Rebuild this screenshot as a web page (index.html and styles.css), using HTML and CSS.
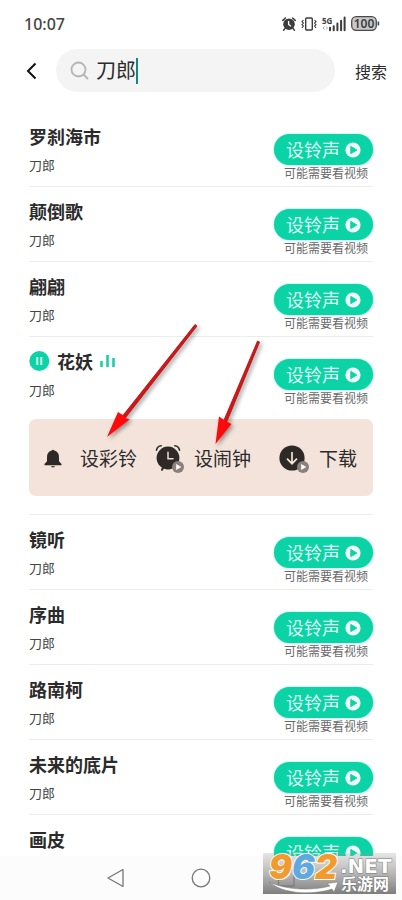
FILE: index.html
```
<!DOCTYPE html>
<html lang="zh-CN">
<head>
<meta charset="utf-8">
<meta name="viewport" content="width=device-width, initial-scale=1">
<title>刀郎 - 搜索</title>
<link rel="stylesheet" href="styles.css">
</head>
<body>
<svg class="defs" aria-hidden="true">
  <symbol id="play" viewBox="0 0 16 16">
    <circle cx="8" cy="8" r="7.6" fill="#effffa"/>
    <path d="M5.8 4.4v7.2L11.8 8z" fill="#0cd3a5" stroke="#0cd3a5" stroke-linejoin="round"/>
  </symbol>
  <symbol id="badge" viewBox="0 0 12 12">
    <circle cx="6" cy="6" r="6" fill="#8a807b"/>
    <path d="M4.4 3.4v5.2L8.8 6z" fill="#fff" stroke="#fff" stroke-width=".6" stroke-linejoin="round"/>
  </symbol>
</svg>
<div class="screen">
  <header class="status">
    <time>10:07</time>
    <div class="status-icons">
      <svg width="14" height="14" viewBox="0 0 14 14" fill="none" stroke="#3c3c3c">
        <circle cx="7" cy="7.2" r="5.8" fill="#3c3c3c" stroke="none"/>
        <path d="M.8 3.4 3.4 1M13.2 3.4 10.6 1M3 11.4l-1.400 1.800M11 11.400l1.400 1.800" stroke-width="1.500" stroke-linecap="round"/>
        <path d="M6.600 4v3.400l2.400 1.800" stroke="#fff" stroke-width="1.300"/>
      </svg>
      <svg width="16" height="14" viewBox="0 0 16 14" fill="none" stroke="#3c3c3c" stroke-width="1.400">
        <rect x="4.700" y="1" width="6.600" height="12" rx="1"/>
        <path d="M2.400 3 1 4.600l1.400 1.500L1 7.600l1.400 1.500L1 10.800M13.600 3 15 4.600l-1.400 1.500L15 7.600l-1.400 1.500 1.400 1.700" stroke-width="1.100"/>
      </svg>
      <svg class="signal" width="24" height="16" viewBox="0 0 24 16">
        <text x="0" y="8" class="net">5G</text>
        <path d="M2.500 10.500 1 12l1.500 1.500M4 10.500 5.500 12 4 13.500" stroke="#aaa" fill="none"/>
        <path d="M8 14.200v-2.400M11.700 14.200v-4M15.400 14.200V7.600M19.100 14.200V4.800M22.600 14.200V1.500" stroke="#3c3c3c" stroke-width="2" stroke-linecap="round" fill="none"/>
      </svg>
      <svg width="29" height="15" viewBox="0 0 29 15">
        <rect x=".7" y=".7" width="24.600" height="13.600" rx="4.500" fill="#c9c9c9" stroke="#4a4a4a" stroke-width="1.300"/>
        <path d="M27.400 5.500v4" stroke="#4a4a4a" stroke-width="1.600"/>
        <text x="13" y="12" text-anchor="middle" class="charge">100</text>
      </svg>
    </div>
  </header>

  <form class="search" onsubmit="return false">
    <button type="button" class="back" aria-label="返回">
      <svg width="12" height="18" viewBox="0 0 12 18"><path d="M9.500 1.500 2 9l7.500 7.500" fill="none" stroke="#111" stroke-width="2"/></svg>
    </button>
    <label class="field">
      <svg width="19" height="19" viewBox="0 0 19 19" fill="none" stroke="#b5b5b5" stroke-width="1.800"><circle cx="8.500" cy="8.500" r="7"/><path d="m13.500 13.500 4.500 4.500"/></svg>
      <input type="text" value="刀郎" aria-label="搜索歌曲">
      <span class="caret"></span>
    </label>
    <button type="submit" class="go">搜索</button>
  </form>

  <main>
    <ul class="songs">
      <li><div class="row"><div><h2>罗刹海市</h2><p>刀郎</p></div><div class="action"><button class="set">设铃声<svg><use href="#play"/></svg></button><small>可能需要看视频</small></div></div></li>
      <li><div class="row"><div><h2>颠倒歌</h2><p>刀郎</p></div><div class="action"><button class="set">设铃声<svg><use href="#play"/></svg></button><small>可能需要看视频</small></div></div></li>
      <li><div class="row"><div><h2>翩翩</h2><p>刀郎</p></div><div class="action"><button class="set">设铃声<svg><use href="#play"/></svg></button><small>可能需要看视频</small></div></div></li>
      <li class="active">
        <div class="row">
          <div>
            <h2>
              <button class="pause" aria-label="暂停"><svg width="21" height="21" viewBox="0 0 21 21"><circle cx="10.300" cy="10" r="10" fill="#0cd3a5"/><path d="M8.300 6v8M12.300 6v8" stroke="#d8fff4" stroke-width="2"/></svg></button>
              花妖
              <svg width="15" height="14" viewBox="0 0 15 14"><path d="M1.500 13V7M7.500 13V1M13.500 13V4" stroke="#1ccfa6" stroke-width="2.600"/></svg>
            </h2>
            <p>刀郎</p>
          </div>
          <div class="action"><button class="set">设铃声<svg><use href="#play"/></svg></button><small>可能需要看视频</small></div>
        </div>
        <div class="panel">
          <button>
            <svg width="30" height="30" viewBox="0 0 30 30" fill="#2c2927"><path d="M11.800 7.600a1.300 1.300 0 0 1 2.400 0c3 .8 4.800 3 4.800 6.400v4.200l2.500 2.800v1.200h-17V21L7 18.200V14c0-3.400 1.800-5.600 4.800-6.400zM11 23.200h4c-.3 1.600-3.700 1.600-4 0z"/></svg>设彩铃
          </button>
          <button>
            <svg width="30" height="30" viewBox="0 0 30 30"><g fill="none" stroke="#2c2927" stroke-linecap="round"><circle cx="14" cy="15" r="11.400" fill="#2c2927" stroke="none"/><path d="M2.500 7.200C3 4.500 4.800 3 7.200 2.800M20.800 2.800c2.400.2 4.200 1.700 4.700 4.400" stroke-width="1.600"/><path d="m9 25-1 1.800" stroke-width="2"/><path d="M14 9.200v6.600h5" stroke="#e9ddd6" stroke-width="1.500"/></g><use href="#badge" x="18" y="18" width="12" height="12"/></svg>设闹钟
          </button>
          <button>
            <svg width="30" height="30" viewBox="0 0 30 30"><circle cx="13" cy="15" r="12.600" fill="#2c2927"/><path d="M13 9v11.500M8 15.700l5 5 5-5" fill="none" stroke="#f3e3da" stroke-width="1.700"/><use href="#badge" x="18" y="18" width="12" height="12"/></svg>下载
          </button>
        </div>
        <svg class="arrows" width="170" height="132" viewBox="100 320 170 132" aria-hidden="true">
          <g fill="#d81313" stroke="#a01616" stroke-width=".8" stroke-linejoin="round">
            <path d="M195 324.500 197 326 125.300 418 122.500 416z"/>
            <path d="M257.500 341 259.600 342 226.800 421.800 223.800 420.500z"/>
            <path fill="#ff0a0a" stroke="none" d="M107 437 118 412 122.500 415 125.500 418 129.500 419.500zM215.500 444 219 416.500 224 420 226.500 421.500 231.500 424z"/>
          </g>
        </svg>
      </li>
      <li><div class="row"><div><h2>镜听</h2><p>刀郎</p></div><div class="action"><button class="set">设铃声<svg><use href="#play"/></svg></button><small>可能需要看视频</small></div></div></li>
      <li><div class="row"><div><h2>序曲</h2><p>刀郎</p></div><div class="action"><button class="set">设铃声<svg><use href="#play"/></svg></button><small>可能需要看视频</small></div></div></li>
      <li><div class="row"><div><h2>路南柯</h2><p>刀郎</p></div><div class="action"><button class="set">设铃声<svg><use href="#play"/></svg></button><small>可能需要看视频</small></div></div></li>
      <li><div class="row"><div><h2>未来的底片</h2><p>刀郎</p></div><div class="action"><button class="set">设铃声<svg><use href="#play"/></svg></button><small>可能需要看视频</small></div></div></li>
      <li><div class="row"><div><h2>画皮</h2></div><div class="action"><button class="set">设铃声<svg><use href="#play"/></svg></button></div></div></li>
    </ul>
  </main>

  <nav>
    <button aria-label="返回"><svg width="20" height="20" viewBox="0 0 20 20"><path d="M17 1.500v17L2 10z"/></svg></button>
    <button aria-label="主页"><svg width="20" height="20" viewBox="0 0 20 20"><circle cx="10" cy="10" r="8.800"/></svg></button>
    <button aria-label="最近任务"><svg width="20" height="20" viewBox="0 0 20 20"><rect x="2.500" y="2" width="15.500" height="16"/></svg></button>
  </nav>

  <svg class="watermark" width="133" height="41" viewBox="0 0 133 41" role="img" aria-label="962.NET 乐游网">
    <defs><linearGradient id="shade" x1="0" y1="0" x2="0" y2="1"><stop offset="0" stop-color="#999" stop-opacity=".25"/><stop offset="1" stop-color="#777" stop-opacity=".95"/></linearGradient></defs>
    <rect width="133" height="41" fill="url(#shade)"/>
    <path d="M6 29c16 8 44 9 61 4l-3-2.500 11-1.500-4 10-2-3C49 42.500 20 41 6 29z" fill="#fff" stroke="#777" stroke-width=".5"/>
    <text x="6" y="26" class="digits"><tspan fill="#f39a2d">9</tspan><tspan fill="#5fa9e0">6</tspan><tspan fill="#f39a2d">2</tspan></text>
    <text x="77" y="20" class="domain">.NET</text>
    <text x="78" y="37" class="brand">乐游网</text>
  </svg>
</div>
</body>
</html>
```
FILE: styles.css
```
* { box-sizing: border-box; }
body {
  margin: 0;
  background: #fff;
  color: #2b2b2b;
  font-family: "Noto Sans CJK SC", "Noto Sans", sans-serif;
}
button {
  padding: 0;
  border: 0;
  background: none;
  color: inherit;
  font: inherit;
  white-space: nowrap;
}
svg { display: block; flex: none; }
.defs { position: absolute; width: 0; height: 0; }

.screen {
  position: relative;
  display: flex;
  flex-direction: column;
  height: 100vh;
  overflow: hidden;
}

.status {
  display: flex;
  align-items: center;
  justify-content: space-between;
  height: 49px;
  padding: 0 22px 2px 24px;
}
.status time {
  color: #444;
  font: 500 16px/20px "Noto Sans", sans-serif;
}
.status-icons { display: flex; align-items: center; gap: 5px; }
.signal { overflow: visible; }
.net { font: bold 8px "Noto Sans", sans-serif; fill: #3c3c3c; }
.charge { font: 600 12px "Noto Sans", sans-serif; fill: #3c3c3c; }

.search {
  display: flex;
  align-items: center;
  padding: 0 15px 0 26px;
}
.back { width: 30px; height: 42px; }
.field {
  display: flex;
  align-items: center;
  flex: 1;
  height: 43px;
  padding-left: 14px;
  border-radius: 22px;
  background: #f4f4f4;
}
.field input {
  width: 40px;
  margin-left: 7px;
  padding: 0 0 2px;
  border: 0;
  outline: 0;
  background: none;
  color: #2b2b2b;
  font: 20px/28px "Noto Sans CJK SC", sans-serif;
}
.caret { width: 2px; height: 26px; background: #128a76; }
.go { margin-left: 20px; font-size: 16px; line-height: 24px; }

main { flex: 1; min-height: 0; overflow: hidden; padding: 20px 29px 0; }
.songs { margin: 0; padding: 0; list-style: none; }
.songs li { border-bottom: 1px solid #ececec; }
.row {
  display: flex;
  justify-content: space-between;
  padding: 13px 0 7px;
}
h2 {
  display: flex;
  align-items: center;
  gap: 7px;
  margin: 0;
  font-size: 18px;
  font-weight: 700;
  line-height: 22px;
}
p { margin: 9px 0 0; font-size: 13px; line-height: 18px; color: #444; }
.action {
  display: flex;
  flex-direction: column;
  align-items: flex-end;
  padding-top: 9px;
  margin-bottom: -1px;
}
.set {
  display: flex;
  align-items: center;
  gap: 5px;
  height: 31px;
  padding: 0 12px;
  border-radius: 16px;
  background: #0cd3a5;
  box-shadow: 0 0 2px #5ff0d0;
  color: #dcfff5;
  font-size: 18px;
  line-height: 31px;
}
.set svg { width: 16px; height: 16px; }
small {
  margin: 1px 5px 0 0;
  color: #6a6a6a;
  font-size: 12px;
  line-height: 14px;
}

.active { position: relative; padding-bottom: 18px; }
.panel {
  display: grid;
  grid-template-columns: 114fr 125fr 78fr;
  align-items: center;
  height: 77px;
  margin-top: 8px;
  padding: 0 16px 0 11px;
  border-radius: 7px;
  background: #f3e3da;
}
.panel button {
  display: flex;
  align-items: center;
  gap: 10px;
  font-size: 19px;
  line-height: 28px;
}
.arrows {
  position: absolute;
  top: -17px;
  left: 71px;
  filter: drop-shadow(2px 2px 2px #0006);
  pointer-events: none;
}

nav {
  display: flex;
  align-items: center;
  justify-content: center;
  gap: 65px;
  height: 44px;
  background: #fcfcfc;
}
nav svg { fill: none; stroke: #777; stroke-width: 1.3; stroke-linejoin: round; }

.watermark { position: absolute; right: 6px; bottom: 6px; }
.digits {
  font: italic 900 34px Inter, "DejaVu Sans", sans-serif;
  stroke: #fff;
  stroke-width: 2px;
  paint-order: stroke;
}
.domain { font: bold 20px "DejaVu Sans", sans-serif; fill: #fff; stroke: #777; stroke-width: 1px; paint-order: stroke; }
.brand { font: bold 16px "Noto Sans CJK SC", sans-serif; fill: #fff; stroke: #777; stroke-width: 1px; paint-order: stroke; }
```
